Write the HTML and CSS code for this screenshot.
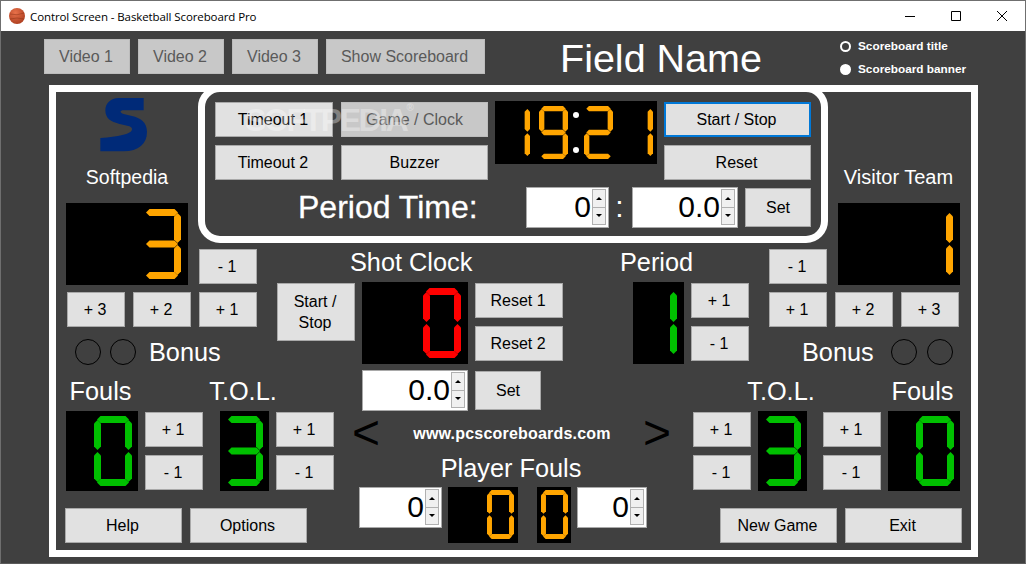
FILE: index.html
```html
<!DOCTYPE html>
<html lang="en">
<head>
    <meta charset="UTF-8">
    <title>Control Screen - Basketball Scoreboard Pro</title>
    <link rel="stylesheet" href="styles.css">
</head>
<body>
    <!-- seven segment digits, reused by every display -->
    <svg class="defs" aria-hidden="true">
        <defs>
            <radialGradient id="ball" cx="0.4" cy="0.3" r="0.8">
                <stop offset="0" stop-color="#e8714a"/>
                <stop offset="1" stop-color="#a83a1c"/>
            </radialGradient>
            <polygon id="a" points="3,3.5 6.5,0 31.5,0 35,3.5 31.5,7 6.5,7"/>
            <polygon id="b" points="34.5,4 38,7.5 38,30.5 34.5,34 31,30.5 31,7.5"/>
            <polygon id="c" points="34.5,36 38,39.5 38,62.5 34.5,66 31,62.5 31,39.5"/>
            <polygon id="d" points="3,66.5 6.5,63 31.5,63 35,66.5 31.5,70 6.5,70"/>
            <polygon id="e" points="3.5,36 7,39.5 7,62.5 3.5,66 0,62.5 0,39.5"/>
            <polygon id="f" points="3.5,4 7,7.5 7,30.5 3.5,34 0,30.5 0,7.5"/>
            <polygon id="g" points="3,35 6.5,31.5 31.5,31.5 35,35 31.5,38.5 6.5,38.5"/>
            <g id="d0"><use href="#a"/><use href="#b"/><use href="#c"/><use href="#d"/><use href="#e"/><use href="#f"/></g>
            <g id="d1"><use href="#b"/><use href="#c"/></g>
            <g id="d2"><use href="#a"/><use href="#b"/><use href="#g"/><use href="#e"/><use href="#d"/></g>
            <g id="d3"><use href="#a"/><use href="#b"/><use href="#g"/><use href="#c"/><use href="#d"/></g>
            <g id="d9"><use href="#a"/><use href="#b"/><use href="#c"/><use href="#d"/><use href="#f"/><use href="#g"/></g>
        </defs>
    </svg>

    <div class="window">
        <header class="titlebar">
            <svg class="app-icon" viewBox="0 0 16 16">
                <circle cx="8" cy="8" r="8" fill="url(#ball)"/>
                <path d="M1 6 Q8 8 15 5 M1 11 Q8 9 15 11" fill="none" stroke="#8c3216" stroke-width="0.5"/>
            </svg>
            <span class="app-title">Control Screen - Basketball Scoreboard Pro</span>
            <div class="win-controls">
                <svg viewBox="0 0 10 10"><path d="M0 5.5H10" stroke="#000" fill="none"/></svg>
                <svg viewBox="0 0 10 10"><path d="M.5.5H9.5V9.5H.5Z" stroke="#000" fill="none"/></svg>
                <svg viewBox="0 0 10 10"><path d="M0 0L10 10M10 0L0 10" stroke="#000" fill="none"/></svg>
            </div>
        </header>

        <main class="content">
            <div class="topbar">
                <button class="btn btn-muted btn-video">Video 1</button>
                <button class="btn btn-muted btn-video">Video 2</button>
                <button class="btn btn-muted btn-video">Video 3</button>
                <button class="btn btn-muted btn-show">Show Scoreboard</button>
                <h1 class="field-name">Field Name</h1>
                <div class="radios">
                    <label class="radio"><span class="radio-dot"></span>Scoreboard title</label>
                    <label class="radio"><span class="radio-dot is-on"></span>Scoreboard banner</label>
                </div>
            </div>

            <div class="board">
                <div class="upper">
                    <div class="team-head home-head">
                        <svg class="logo" viewBox="0 0 192 192">
                            <path d="M155 18H80C55 18 40 35 40 55C40 80 58 90 80 95L112 103C125 107 122 120 105 125C85 132 50 136 25 138V178H95C140 178 165 155 165 120C165 90 145 78 120 72L95 66C82 62 84 55 95 55H155Z" fill="#002a78"/>
                        </svg>
                        <div class="label team-name">Softpedia</div>
                    </div>
                    <div class="led led-score home-score">
                        <svg class="digit digit-lg" viewBox="0 0 38 70" preserveAspectRatio="none"><use href="#d3"/></svg>
                    </div>
                    <button class="btn btn-sm home-minus">- 1</button>

                    <section class="panel">
                        <div class="panel-row">
                            <div class="btn-grid">
                                <button class="btn btn-timeout">Timeout 1</button>
                                <button class="btn btn-muted btn-wide">Game / Clock</button>
                                <button class="btn btn-timeout">Timeout 2</button>
                                <button class="btn btn-wide">Buzzer</button>
                            </div>
                            <div class="led led-clock">
                                <svg class="digit digit-md" viewBox="0 0 38 70" preserveAspectRatio="none"><use href="#d1"/></svg>
                                <svg class="digit digit-md gap-9" viewBox="0 0 38 70" preserveAspectRatio="none"><use href="#d9"/></svg>
                                <span class="clock-dots"><i></i><i></i></span>
                                <svg class="digit digit-md" viewBox="0 0 38 70" preserveAspectRatio="none"><use href="#d2"/></svg>
                                <svg class="digit digit-md gap-11" viewBox="0 0 38 70" preserveAspectRatio="none"><use href="#d1"/></svg>
                            </div>
                            <div class="btn-col">
                                <button class="btn btn-wide btn-focus">Start / Stop</button>
                                <button class="btn btn-wide">Reset</button>
                            </div>
                        </div>
                        <div class="period-time">
                            <span class="period-label">Period Time:</span>
                            <div class="spin spin-83"><span>0</span><div class="spin-btns"><b class="up"></b><b class="down"></b></div></div>
                            <span class="period-colon">:</span>
                            <div class="spin spin-106"><span>0.0</span><div class="spin-btns"><b class="up"></b><b class="down"></b></div></div>
                            <button class="btn btn-set">Set</button>
                        </div>
                    </section>

                    <div class="team-head visitor-head">
                        <div class="label team-name">Visitor Team</div>
                    </div>
                    <div class="led led-score visitor-score">
                        <svg class="digit digit-lg" viewBox="0 0 38 70" preserveAspectRatio="none"><use href="#d1"/></svg>
                    </div>
                    <button class="btn btn-sm visitor-minus">- 1</button>

                    <div class="score-controls home-controls">
                        <div class="btn-row">
                            <button class="btn btn-sm">+ 3</button>
                            <button class="btn btn-sm">+ 2</button>
                            <button class="btn btn-sm">+ 1</button>
                        </div>
                        <div class="bonus">
                            <span class="bulb"></span><span class="bulb bulb-2"></span>
                            <span class="label bonus-label">Bonus</span>
                        </div>
                    </div>

                    <div class="center">
                        <div class="shot">
                            <div class="label shot-label">Shot Clock</div>
                            <button class="btn shot-start">Start /<br>Stop</button>
                            <div class="led led-shot">
                                <svg class="digit digit-lg" viewBox="0 0 38 70" preserveAspectRatio="none"><use href="#d0"/></svg>
                            </div>
                            <div class="btn-col shot-resets">
                                <button class="btn btn-reset">Reset 1</button>
                                <button class="btn btn-reset">Reset 2</button>
                            </div>
                        </div>
                        <div class="period">
                            <div class="label period-title">Period</div>
                            <div class="period-row">
                                <div class="led led-period">
                                    <svg class="digit digit-lg" viewBox="0 0 38 70" preserveAspectRatio="none"><use href="#d1"/></svg>
                                </div>
                                <div class="btn-col">
                                    <button class="btn btn-sm">+ 1</button>
                                    <button class="btn btn-sm">- 1</button>
                                </div>
                            </div>
                        </div>
                    </div>

                    <div class="score-controls visitor-controls">
                        <div class="btn-row">
                            <button class="btn btn-sm">+ 1</button>
                            <button class="btn btn-sm">+ 2</button>
                            <button class="btn btn-sm">+ 3</button>
                        </div>
                        <div class="bonus bonus-right">
                            <span class="label bonus-label">Bonus</span>
                            <span class="bulb"></span><span class="bulb bulb-3"></span>
                        </div>
                    </div>
                </div>

                <div class="lower">
                    <div class="side side-left">
                        <div class="tallies">
                            <div class="tally">
                                <div class="tally-display display-fouls">
                                    <div class="label tally-label">Fouls</div>
                                    <div class="led led-tally"><svg class="digit digit-lg" viewBox="0 0 38 70" preserveAspectRatio="none"><use href="#d0"/></svg></div>
                                </div>
                                <div class="btn-col tally-btns">
                                    <button class="btn btn-sm">+ 1</button>
                                    <button class="btn btn-sm">- 1</button>
                                </div>
                            </div>
                            <div class="tally">
                                <div class="tally-display display-tol">
                                    <div class="label tally-label">T.O.L.</div>
                                    <div class="led led-tally"><svg class="digit digit-lg" viewBox="0 0 38 70" preserveAspectRatio="none"><use href="#d3"/></svg></div>
                                </div>
                                <div class="btn-col tally-btns">
                                    <button class="btn btn-sm">+ 1</button>
                                    <button class="btn btn-sm">- 1</button>
                                </div>
                            </div>
                        </div>
                        <div class="footer-btns">
                            <button class="btn btn-foot">Help</button>
                            <button class="btn btn-foot">Options</button>
                        </div>
                    </div>

                    <div class="middle">
                        <div class="shot-set">
                            <div class="spin spin-106"><span>0.0</span><div class="spin-btns"><b class="up"></b><b class="down"></b></div></div>
                            <button class="btn btn-set">Set</button>
                        </div>
                        <div class="site-row">
                            <span class="arrow">&lt;</span>
                            <span class="site">www.pcscoreboards.com</span>
                            <span class="arrow">&gt;</span>
                        </div>
                        <div class="label player-label">Player Fouls</div>
                        <div class="player-row">
                            <div class="spin spin-83"><span>0</span><div class="spin-btns"><b class="up"></b><b class="down"></b></div></div>
                            <div class="led led-player-a"><svg class="digit digit-sm" viewBox="0 0 38 70" preserveAspectRatio="none"><use href="#d0"/></svg></div>
                            <div class="led led-player-b"><svg class="digit digit-sm" viewBox="0 0 38 70" preserveAspectRatio="none"><use href="#d0"/></svg></div>
                            <div class="spin spin-70"><span>0</span><div class="spin-btns"><b class="up"></b><b class="down"></b></div></div>
                        </div>
                    </div>

                    <div class="side side-right">
                        <div class="tallies">
                            <div class="tally">
                                <div class="btn-col tally-btns">
                                    <button class="btn btn-sm">+ 1</button>
                                    <button class="btn btn-sm">- 1</button>
                                </div>
                                <div class="tally-display display-tol">
                                    <div class="label tally-label">T.O.L.</div>
                                    <div class="led led-tally"><svg class="digit digit-lg" viewBox="0 0 38 70" preserveAspectRatio="none"><use href="#d3"/></svg></div>
                                </div>
                            </div>
                            <div class="tally">
                                <div class="btn-col tally-btns">
                                    <button class="btn btn-sm">+ 1</button>
                                    <button class="btn btn-sm">- 1</button>
                                </div>
                                <div class="tally-display display-fouls">
                                    <div class="label tally-label">Fouls</div>
                                    <div class="led led-tally"><svg class="digit digit-lg" viewBox="0 0 38 70" preserveAspectRatio="none"><use href="#d0"/></svg></div>
                                </div>
                            </div>
                        </div>
                        <div class="footer-btns">
                            <button class="btn btn-foot">New Game</button>
                            <button class="btn btn-foot">Exit</button>
                        </div>
                    </div>
                </div>
            </div>

            <span class="watermark">SOFTPEDIA<sup>®</sup></span>
        </main>
    </div>
</body>
</html>
```

FILE: styles.css
```css
/* Global */
* {
    box-sizing: border-box;
}

body {
    margin: 0;
    width: 1026px;
    height: 564px;
    overflow: hidden;
    font-family: "Liberation Sans", Arial, sans-serif;
    background-color: #404040;
}

.defs {
    position: absolute;
    width: 0;
    height: 0;
}

.window {
    position: relative;
    width: 1026px;
    height: 564px;
    border: 1px solid #6f6f6f;
    border-bottom-color: #5a5a5a;
    background-color: #404040;
    display: flex;
    flex-direction: column;
}

/* Title bar */
.titlebar {
    height: 30px;
    flex: none;
    background-color: #fff;
    display: flex;
    align-items: center;
    padding-left: 8px;
}

.app-icon {
    width: 16px;
    height: 16px;
}

.app-title {
    margin-left: 5px;
    font-family: "Open Sans", sans-serif;
    font-size: 11.5px;
    letter-spacing: -0.1px;
    color: #000;
}

.win-controls {
    margin-left: auto;
    display: flex;
    gap: 36px;
    padding-right: 18px;
}

.win-controls svg {
    width: 10px;
    height: 10px;
    display: block;
}

/* Buttons */
.btn {
    display: block;
    margin: 0;
    padding: 0 2px 0 0;
    height: 35px;
    border: 1px solid #a9a9a9;
    background-color: #e1e1e1;
    color: #000;
    font-family: inherit;
    font-size: 16px;
    line-height: 18px;
}

.btn-muted {
    background-color: #c8c8c8;
    color: #5a5a5a;
    border-color: #bcbcbc;
}

.btn-focus {
    border: 2px solid #0078d7;
}

.btn-sm {
    width: 58px;
}

.btn-video {
    width: 86px;
}

.btn-show {
    width: 159px;
}

.btn-timeout {
    width: 118px;
}

.btn-wide {
    width: 147px;
}

.btn-grid .btn-wide {
    padding-right: 0;
}

.btn-set {
    width: 66px;
    height: 39px;
    padding-right: 0;
}

.btn-reset {
    width: 88px;
}

.btn-foot {
    width: 117px;
}

.btn-col {
    display: flex;
    flex-direction: column;
    gap: 8px;
}

.btn-row {
    display: flex;
    gap: 8px;
}

.label {
    color: #fff;
    font-size: 25.3px;
    line-height: 28px;
    white-space: nowrap;
}

/* Top bar */
.content {
    flex: 1;
    position: relative;
}

.topbar {
    height: 54px;
    padding: 8px 0 0 43px;
    display: flex;
    align-items: flex-start;
    gap: 8px;
}

.field-name {
    margin: 0 0 0 67px;
    width: 263px;
    font-size: 39.5px;
    font-weight: normal;
    line-height: 38px;
    color: #fff;
    white-space: nowrap;
}

.radios {
    margin: -1px 0 0 9px;
    display: flex;
    flex-direction: column;
    gap: 7px;
}

.radio {
    display: flex;
    align-items: center;
    height: 16px;
    color: #fff;
    font-size: 11.8px;
    font-weight: bold;
    white-space: nowrap;
}

.radio-dot {
    width: 11px;
    height: 11px;
    margin-right: 7px;
    border: 2px solid #fff;
    border-radius: 50%;
}

.radio-dot.is-on {
    background-color: #fff;
}

/* Board */
.board {
    margin-left: 48px;
    width: 929px;
    height: 472px;
    border: 7px solid #fff;
}

.upper {
    height: 275px;
    display: grid;
    grid-template-columns: 142px 59px 512px 59px 143px;
    grid-template-rows: 111px 40px 42px 82px;
}

.team-head {
    display: flex;
    flex-direction: column;
    align-items: center;
}

.home-head {
    grid-column: 1;
    grid-row: 1;
}

.logo {
    margin-left: -6px;
    width: 64px;
    height: 64px;
    display: block;
}

.team-name {
    font-size: 20px;
    line-height: 24px;
}

.home-head .team-name {
    margin-top: 9px;
    font-size: 19.5px;
}

.visitor-head {
    grid-column: 5;
    grid-row: 1;
}

.visitor-head .team-name {
    margin: 73px 2px 0 0;
}

/* LED displays */
.led {
    background-color: #000;
    display: flex;
    justify-content: flex-end;
    padding-right: 7px;
    color: #ffa500;
}

.digit {
    display: block;
    flex: none;
    fill: currentColor;
}

.digit-lg {
    width: 38px;
    height: 70px;
}

.digit-md {
    width: 29px;
    height: 53px;
}

.digit-sm {
    width: 27px;
    height: 49px;
}

.led-score {
    width: 122px;
    height: 82px;
    padding-top: 6px;
}

.home-score {
    grid-column: 1;
    grid-row: 2 / 4;
    margin-left: 10px;
}

.visitor-score {
    grid-column: 5;
    grid-row: 2 / 4;
    margin-left: 10px;
}

.home-minus {
    grid-column: 2;
    grid-row: 3;
    margin: 6px 0 0 1px;
}

.visitor-minus {
    grid-column: 4;
    grid-row: 3;
    margin-top: 6px;
}

/* Panel with game clock */
.panel {
    grid-column: 2 / 5;
    grid-row: 1 / 3;
    margin-top: -7px;
    height: 158px;
    border: 7px solid #fff;
    border-radius: 22px;
    padding: 9px 0 0 10px;
}

.panel-row {
    display: flex;
}

.btn-grid {
    display: grid;
    grid-template-columns: 118px 147px;
    grid-auto-rows: 35px;
    gap: 8px;
    margin-top: 1px;
    width: 273px;
}

.led-clock {
    margin-left: 7px;
    width: 162px;
    height: 63px;
    padding: 5px 4px 0 0;
}

.gap-9 {
    margin-left: 9px;
}

.gap-11 {
    margin-left: 11px;
}

.clock-dots {
    width: 16px;
    display: flex;
    flex-direction: column;
    align-items: center;
    gap: 29px;
    padding-top: 6px;
}

.clock-dots i {
    width: 6px;
    height: 6px;
    border-radius: 50%;
    background-color: #fff;
}

.panel-row .btn-col {
    margin: 1px 0 0 7px;
}

.period-time {
    display: flex;
    align-items: flex-start;
    margin-top: 7px;
}

.period-label {
    margin-left: 83px;
    width: 228px;
    color: #fff;
    font-size: 32px;
    line-height: 40px;
    white-space: nowrap;
    -webkit-text-stroke: 0.3px #fff;
}

.period-colon {
    width: 23px;
    padding-right: 2px;
    text-align: center;
    color: #fff;
    font-size: 30px;
    line-height: 39px;
}

.period-time .btn-set {
    margin: 1px 0 0 7px;
}

/* Number spinner */
.spin {
    height: 41px;
    flex: none;
    border: 1px solid #a9a9a9;
    background-color: #fff;
    display: flex;
    justify-content: flex-end;
    padding: 1px 1px 1px 0;
}

.spin span {
    font-size: 30px;
    line-height: 35px;
    color: #000;
    margin-right: 1px;
}

.spin-83 {
    width: 83px;
}

.spin-106 {
    width: 106px;
}

.spin-70 {
    width: 70px;
}

.spin-btns {
    width: 14px;
    height: 36px;
    display: flex;
    flex-direction: column;
    margin-right: 1px;
    border: 1px solid #b0b0b0;
    background-color: #f0f0f0;
}

.spin-btns b {
    flex: 1;
    display: flex;
    align-items: center;
    justify-content: center;
}

.spin-btns b + b {
    border-top: 1px solid #b0b0b0;
}

.spin-btns b::after {
    content: "";
    border-left: 3px solid transparent;
    border-right: 3px solid transparent;
}

.spin-btns .up::after {
    border-bottom: 3px solid #000;
}

.spin-btns .down::after {
    border-top: 3px solid #000;
}

/* Team controls */
.score-controls {
    grid-row: 4;
    padding-top: 7px;
}

.home-controls {
    grid-column: 1 / 3;
    padding-left: 11px;
}

.visitor-controls {
    grid-column: 4 / 6;
}

.bonus {
    display: flex;
    align-items: center;
    margin-top: 12px;
    height: 26px;
    padding-left: 8px;
}

.bonus-right {
    padding-left: 34px;
}

.bulb {
    width: 26px;
    height: 26px;
    flex: none;
    border: 1px solid #000;
    border-radius: 50%;
}

.bulb-2 {
    margin-left: 9px;
}

.bulb-3 {
    margin-left: 10px;
}

.bonus-label {
    margin-left: 13px;
}

.bonus-right .bonus-label {
    width: 71px;
    margin: 0 18px 0 -1px;
}

/* Shot clock and period */
.center {
    grid-column: 3;
    grid-row: 3 / 5;
    display: flex;
}

.shot {
    margin-left: 20px;
    width: 286px;
    display: grid;
    grid-template-columns: 78px 106px 88px;
    grid-template-rows: 39px 82px;
    column-gap: 7px;
}

.shot-label {
    grid-column: 1 / 4;
    margin: 5px 0 0 73px;
}

.shot-start {
    height: 58px;
    margin-top: 1px;
    line-height: 21px;
}

.led-shot {
    height: 82px;
    padding-top: 6px;
    color: #ff0000;
}

.shot-resets {
    margin-top: 1px;
}

.period {
    margin-left: 57px;
}

.period-title {
    margin-top: 5px;
    height: 34px;
}

.period-row {
    margin-left: 13px;
    display: flex;
    gap: 7px;
}

.led-period {
    width: 51px;
    height: 82px;
    padding-top: 6px;
    color: #00c000;
}

.period-row .btn-col {
    margin-top: 1px;
}

/* Lower part of the board */
.lower {
    display: flex;
    height: 183px;
}

.side {
    flex: none;
}

.side-left {
    width: 284px;
    padding-left: 10px;
}

.side-right {
    width: 281px;
    padding-left: 3px;
}

.tallies {
    padding-top: 10px;
    display: flex;
    gap: 17px;
}

.side-right .tallies {
    gap: 16px;
}

.tally {
    display: flex;
    gap: 7px;
}

.tally-display {
    display: flex;
    flex-direction: column;
    align-items: center;
}

.display-fouls {
    width: 72px;
}

.display-tol {
    width: 49px;
}

.tally-label {
    height: 34px;
    margin-right: 3px;
}

.tally-btns {
    padding-top: 35px;
}

.led-tally {
    width: 100%;
    height: 80px;
    padding: 5px 6px 0 0;
    color: #00c000;
}

.footer-btns {
    display: flex;
    gap: 8px;
    margin: 17px 0 0 -1px;
}

.side-right .footer-btns {
    margin-left: 27px;
}

.middle {
    width: 350px;
    flex: none;
}

.shot-set {
    display: flex;
    gap: 7px;
    padding: 3px 0 0 22px;
}

.shot-set .btn-set {
    margin-top: 1px;
}

.site-row {
    height: 42px;
    width: 319px;
    margin-left: 12px;
    padding-top: 1px;
    display: flex;
    justify-content: space-between;
    align-items: center;
}

.arrow {
    color: #000;
    font-size: 48px;
    line-height: 42px;
}

.site {
    margin: 2px 0 0 1px;
    color: #fff;
    font-size: 16px;
    font-weight: bold;
    letter-spacing: 0.2px;
}

.player-label {
    text-align: center;
    margin: 1px 0 0 -8px;
    height: 33px;
}

.player-row {
    display: flex;
    margin-left: 19px;
    align-items: flex-start;
}

.led-player-a,
.led-player-b {
    height: 56px;
    padding: 3px 4px 0 0;
}

.led-player-a {
    width: 70px;
    margin-left: 6px;
}

.led-player-b {
    width: 34px;
    margin-left: 19px;
    padding-right: 3px;
}

.player-row .spin-70 {
    margin-left: 6px;
}

/* Watermark over the top buttons */
.watermark {
    position: absolute;
    left: 244px;
    top: 71px;
    color: rgba(255, 255, 255, 0.35);
    font-size: 32px;
    font-weight: bold;
    letter-spacing: -2.4px;
    white-space: nowrap;
    pointer-events: none;
}

.watermark sup {
    font-size: 10px;
    vertical-align: 20px;
    line-height: 0;
}
```
